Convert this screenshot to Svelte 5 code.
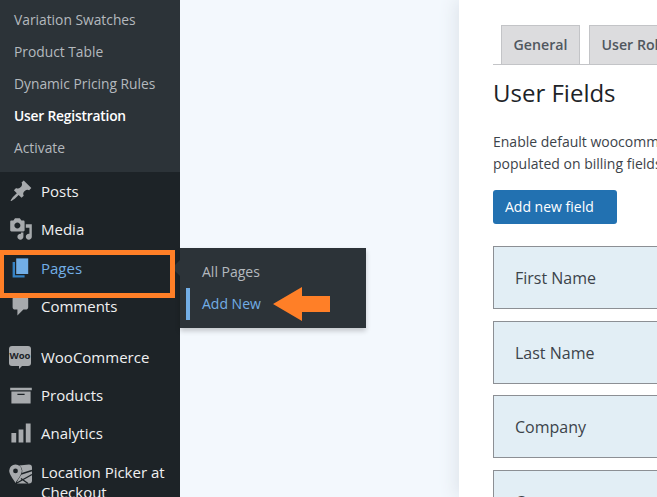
<script>
  const submenu = [
    { label: 'Variation Swatches' },
    { label: 'Product Table' },
    { label: 'Dynamic Pricing Rules' },
    { label: 'User Registration', current: true },
    { label: 'Activate' }
  ];
  const fields = ['First Name', 'Last Name', 'Company', 'Country'];
</script>

{#snippet icon(d)}
  <svg class="icon" viewBox="0 0 20 20" aria-hidden="true"><path {d} /></svg>
{/snippet}

<div class="page">
  <aside class="sidebar">
    <ul class="submenu">
      {#each submenu as item}
        <li class:current={item.current}>{item.label}</li>
      {/each}
    </ul>

    <nav class="menu">
      <div class="item">
        {@render icon('M10.44 3.02l1.82-1.82 6.36 6.35-1.83 1.82c-1.05-.68-2.48-.57-3.41.36l-.75.75c-.92.93-1.04 2.35-.35 3.41l-1.83 1.82-2.41-2.41-2.8 2.79c-.42.42-3.38 2.71-3.8 2.29s1.86-3.39 2.28-3.81l2.79-2.79L4.1 9.36l1.83-1.82c1.05.69 2.48.57 3.4-.36l.75-.75c.93-.92 1.05-2.35.36-3.41z')}
        <span>Posts</span>
      </div>
      <div class="item">
        {@render icon('M13 11V4c0-.55-.45-1-1-1h-1.67L9 1H5L3.67 3H2c-.55 0-1 .45-1 1v7c0 .55.45 1 1 1h10c.55 0 1-.45 1-1zM7 4.5c1.38 0 2.5 1.12 2.5 2.5S8.38 9.5 7 9.5 4.5 8.38 4.5 7 5.62 4.5 7 4.5zM14 6h5v10.5c0 1.38-1.12 2.5-2.5 2.5S14 17.88 14 16.5s1.12-2.5 2.5-2.5c.17 0 .34.02.5.05V9h-3V6zm-4 8.05V13h2v3.5c0 1.38-1.12 2.5-2.5 2.5S7 17.88 7 16.5 8.12 14 9.5 14c.17 0 .34.02.5.05z')}
        <span>Media</span>
      </div>
      <div class="item active">
        <svg class="icon" viewBox="0 0 20 20" aria-hidden="true">
          <path class="back" d="M5 16h8v2H3V5h2v11z" />
          <path class="front" d="M6 15V2h10v13H6z" />
        </svg>
        <span>Pages</span>
        <div class="highlight"></div>
      </div>
      <div class="item">
        {@render icon('M5 2h9c1.1 0 2 .9 2 2v7c0 1.1-.9 2-2 2h-2l-5 5v-5H5c-1.1 0-2-.9-2-2V4c0-1.1.9-2 2-2z')}
        <span>Comments</span>
      </div>

      <div class="item spaced">
        <div class="woo"><b>Woo</b></div>
        <span>WooCommerce</span>
      </div>
      <div class="item">
        {@render icon('M19 4v2H1V4h18zM2 7h16v10H2V7zm11 3V9H7v1h6z')}
        <span>Products</span>
      </div>
      <div class="item">
        {@render icon('M18 18V2h-4v16h4zm-6 0V7H8v11h4zm-6 0v-8H2v8h4z')}
        <span>Analytics</span>
      </div>
      <div class="item tall">
        <svg class="icon" viewBox="0 0 24 24" aria-hidden="true">
          <path d="M10 3.5 20 2.5c2 0 3 1 3 3v13c0 2-1 3-3 3H8z" />
          <path class="road" d="M7 21.5 23 12.5M12 12 23 8.5M12 16.5l7 5" />
          <path class="pin" fill-rule="evenodd" d="M6.5 2.500a6.300 6.300 0 0 1 6.300 6.300c0 3.500-3.800 8-6.300 12.200C4 16.800.2 12.300.2 8.800a6.300 6.300 0 0 1 6.300-6.300zm0 4a2.400 2.400 0 1 0 0 4.800 2.400 2.400 0 0 0 0-4.800z" />
        </svg>
        <span>Location Picker at Checkout</span>
      </div>
    </nav>
  </aside>

  <main class="main">
    <section class="panel">
      <div class="tabs">
        <div class="tab">General</div>
        <div class="tab">User Roles</div>
      </div>
      <h1>User Fields</h1>
      <p>Enable default woocommerce checkout fields that will be<br />populated on billing fields during registration process.</p>
      <button type="button">Add new field</button>
      <div class="fields">
        {#each fields as field}
          <div class="field">{field}</div>
        {/each}
      </div>
    </section>
  </main>

  <div class="flyout">
    <div class="fly-item">All Pages</div>
    <div class="fly-item on">Add New</div>
    <svg class="arrow" viewBox="0 0 57 34" aria-hidden="true"><path d="M0 17 29 0v9h28v16H29v9z" /></svg>
  </div>
</div>

<style>
  :global(body) {
    margin: 0;
  }

  .page {
    position: relative;
    display: flex;
    width: 657px;
    height: 497px;
    overflow: hidden;
    background: #f3f8fd;
    font-family: "Open Sans", "Liberation Sans", sans-serif;
  }

  .sidebar {
    flex: 0 0 180px;
    background: #1d2327;
    color: #f0f0f1;
    font-size: 15px;
  }

  .submenu {
    margin: 0;
    padding: 4px 0 8px 14px;
    list-style: none;
    background: #2c3338;
    color: #b4b9be;
    font-size: 13.8px;
  }

  .submenu li {
    height: 32px;
    line-height: 32px;
  }

  .submenu .current {
    color: #fff;
    font-weight: 600;
    letter-spacing: -0.2px;
  }

  .menu {
    display: flex;
    flex-direction: column;
  }

  .item {
    position: relative;
    display: flex;
    align-items: center;
    gap: 8px;
    height: 38.3px;
    padding-left: 9px;
  }

  .spaced {
    margin-top: 12.5px;
  }

  .tall {
    align-items: flex-start;
    height: 60px;
    line-height: 20px;
    padding-top: 9px;
  }

  .icon {
    flex: 0 0 24px;
    width: 24px;
    height: 24px;
    fill: #a7aaad;
  }

  .road {
    fill: none;
    stroke: #1d2327;
    stroke-width: 1.4;
  }

  .pin {
    stroke: #1d2327;
    stroke-width: 1;
    paint-order: stroke;
  }

  .woo {
    position: relative;
    flex: 0 0 22px;
    width: 22px;
    height: 20px;
    margin: 0 2px 2px 0;
    border-radius: 3px;
    background: #a7aaad;
    color: #1d2327;
    font-size: 9.5px;
    line-height: 20px;
    text-align: center;
  }

  .woo::after {
    content: "";
    position: absolute;
    left: 10px;
    bottom: -3px;
    border-top: 3px solid #a7aaad;
    border-right: 3px solid transparent;
  }

  .active {
    color: #72aee6;
  }

  .active .back {
    fill: #3582c4;
  }

  .active .front {
    fill: #72aee6;
  }

  .highlight {
    position: absolute;
    z-index: 2;
    left: 0;
    top: 1px;
    box-sizing: border-box;
    width: 175px;
    height: 48px;
    border: 5px solid #ff7f27;
    border-left-width: 4px;
    pointer-events: none;
  }

  .main {
    flex: 1;
    display: flex;
    justify-content: flex-end;
    min-width: 0;
  }

  .panel {
    flex: 0 0 198px;
    box-sizing: border-box;
    width: 198px;
    padding: 25px 0 0 34px;
    background: #fff;
    box-shadow: -4px 0 16px #dfe5ec;
    color: #3c434a;
    font-size: 14px;
    white-space: nowrap;
  }

  .tabs {
    display: flex;
    gap: 9px;
    width: 300px;
    padding-left: 8px;
    border-bottom: 1px solid #c3c4c7;
  }

  .tab {
    box-sizing: border-box;
    height: 39px;
    padding: 0 11.5px;
    border: 1px solid #c3c4c7;
    border-bottom: 0;
    background: #dcdcde;
    color: #50575e;
    font-size: 14.2px;
    font-weight: 600;
    line-height: 38px;
  }

  h1 {
    margin: 11px 0 0;
    color: #1d2327;
    font-size: 24px;
    font-weight: 400;
    line-height: 34px;
  }

  p {
    margin: 21px 0 0;
    font-size: 14px;
    line-height: 22px;
  }

  button {
    display: block;
    height: 34px;
    width: 124px;
    margin-top: 15px;
    padding: 0 0 2px 12px;
    border: 0;
    border-radius: 3px;
    background: #2271b1;
    color: #fff;
    font: inherit;
    font-size: 14px;
    text-align: left;
  }

  .fields {
    display: flex;
    flex-direction: column;
    gap: 11.5px;
    width: 300px;
    margin-top: 22px;
  }

  .field {
    box-sizing: border-box;
    height: 63px;
    padding-left: 21px;
    border: 1px solid #8c8f94;
    background: #e2eef5;
    font-size: 16px;
    font-weight: 500;
    line-height: 63px;
  }

  .flyout {
    position: absolute;
    left: 180px;
    top: 248px;
    box-sizing: border-box;
    width: 186px;
    height: 80px;
    padding: 8px 0;
    background: #2c3338;
    box-shadow: 0 3px 5px rgba(0, 0, 0, 0.2);
    color: #b4b9be;
    font-size: 14px;
  }

  .flyout::before {
    content: "";
    position: absolute;
    left: -8px;
    top: 12px;
    border: 8px solid transparent;
    border-left: 0;
    border-right-color: #2c3338;
  }

  .fly-item {
    position: relative;
    height: 32px;
    padding-left: 22px;
    line-height: 32px;
  }

  .on {
    color: #72aee6;
  }

  .on::before {
    content: "";
    position: absolute;
    left: 6px;
    top: 0;
    width: 4px;
    height: 32px;
    background: #72aee6;
  }

  .arrow {
    position: absolute;
    left: 93px;
    top: 39px;
    width: 57px;
    height: 34px;
    fill: #ff7f27;
  }
</style>
